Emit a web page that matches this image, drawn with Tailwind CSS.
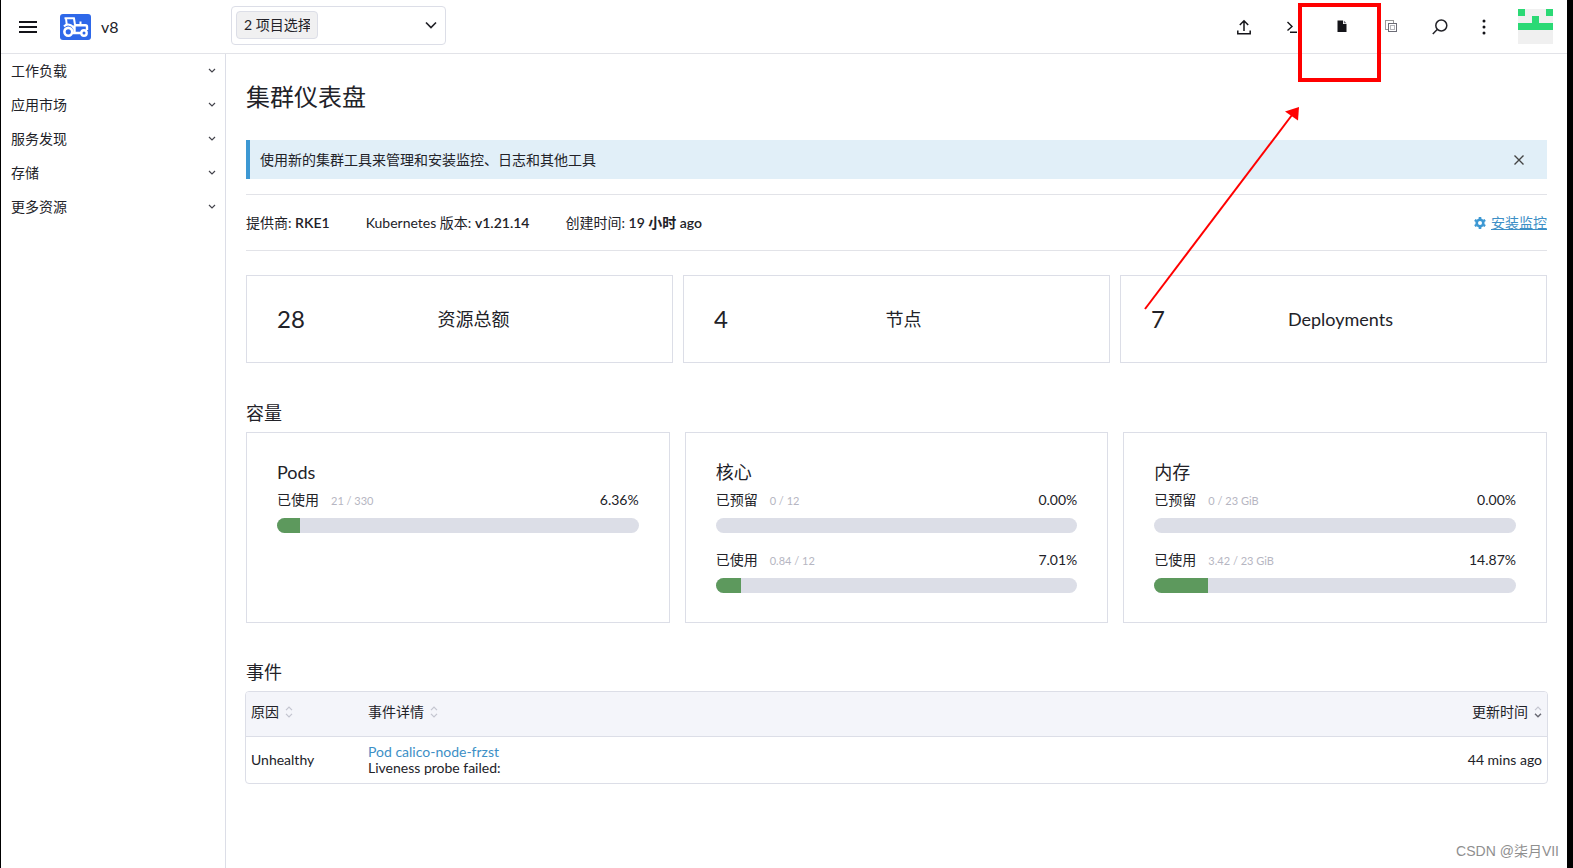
<!DOCTYPE html>
<html lang="zh-CN">
<head>
<meta charset="utf-8">
<title>集群仪表盘</title>
<meta name="viewport" content="width=device-width, initial-scale=1">
<script src="https://cdn.jsdelivr.net/npm/@tailwindcss/browser@4"></script>
</head>
<body class="relative flex min-h-screen flex-col overflow-x-hidden border-r-6 border-l border-black bg-white font-['Lato','Noto_Sans_CJK_SC',sans-serif] text-sm text-[#222228]">

<header class="flex h-[54px] shrink-0 items-center border-b border-[#e2e3e8]">
  <button type="button" aria-label="菜单" class="ml-[18px] flex h-6 w-[18px] items-center">
    <svg class="h-3 w-[18px]" viewBox="0 0 18 12" fill="#141419"><path d="M0 0h18v2H0zM0 5h18v2H0zM0 10h18v2H0z"/></svg>
  </button>
  <svg class="ml-[23px] h-[26px] w-[31px]" viewBox="0 0 31 26" aria-hidden="true">
    <rect width="31" height="26" rx="3" fill="#2e68e9"/>
    <path d="M4.500 4.200h10.300M6 4.500l.8 6.500M14 4.500l1 6.300" fill="none" stroke="#fff" stroke-width="2"/>
    <path d="M20.500 11V7.500" stroke="#fff" stroke-width="2"/>
    <path d="M14.500 11.200H25.500a1.500 1.500 0 0 1 1.500 1.500V16M12.500 19h8.500M14.500 11.200v7" fill="none" stroke="#fff" stroke-width="2.400"/>
    <path d="M4 12.500c2.500-3 8-2.500 10 2" fill="none" stroke="#fff" stroke-width="2"/>
    <circle cx="8.300" cy="17.800" r="3.900" fill="#2e68e9" stroke="#fff" stroke-width="2.600"/>
    <circle cx="24" cy="19" r="2.700" fill="#2e68e9" stroke="#fff" stroke-width="2.400"/>
  </svg>
  <span class="ml-[10px] w-[130px] text-base">v8</span>
  <label class="-mt-[3px] flex h-[39px] w-[215px] items-center justify-between rounded border border-[#dcdee7] pr-2 pl-1">
    <select aria-label="项目选择" class="h-7 w-[82px] appearance-none rounded-sm border border-[#dcdee7] bg-[#f0f0f1] px-[7px] text-sm">
      <option>2 项目选择</option>
    </select>
    <svg class="h-3 w-3" viewBox="0 0 12 12" fill="none" stroke="#222228" stroke-width="1.700"><path d="M1 3.500l5 5 5-5"/></svg>
  </label>

  <div class="ml-auto flex items-center pr-[14px]">
    <button type="button" aria-label="导入 YAML" class="mr-9">
      <svg class="block h-4 w-[14px]" viewBox="0 0 14 16" fill="none" stroke="#141419" stroke-width="1.500"><path d="M7 12V1.800M2.800 6L7 1.800 11.200 6M.8 11.500v3.300h12.400v-3.300"/></svg>
    </button>
    <button type="button" aria-label="Kubectl Shell" class="mr-10">
      <svg class="block h-4 w-[10px]" viewBox="0 0 10 16" fill="none" stroke="#141419" stroke-width="1.400"><path d="M.5 3l4.500 4.500-4.500 4M3 13.200H10"/></svg>
    </button>
    <button type="button" aria-label="下载 KubeConfig" class="mr-[38px]">
      <svg class="block h-4 w-[10px]" viewBox="0 0 10 16" fill="#141419"><path d="M.5 1.500H6V5h3.500v8H.5z"/><path d="M6.800 1.500l2.700 2.700H6.800z" fill="#6c6c76"/></svg>
    </button>
    <button type="button" aria-label="复制 KubeConfig" class="mr-[35px]">
      <svg class="block h-4 w-3" viewBox="0 0 12 16" fill="none" stroke="#6c6c76"><path d="M2.500 10.500h-2v-9h8v2" stroke-dasharray="1 1" stroke="#333"/><rect x="3.500" y="4.500" width="8" height="8"/><rect x="5.500" y="6.500" width="4" height="4" stroke-dasharray="1 1"/></svg>
    </button>
    <button type="button" aria-label="搜索" class="mr-[34px]">
      <svg class="block h-4 w-4" viewBox="0 0 16 16" fill="none" stroke="#222228" stroke-width="1.500"><circle cx="9.300" cy="6.500" r="5.500"/><path d="M5.200 10.500L.8 15"/></svg>
    </button>
    <button type="button" aria-label="更多" class="mr-8">
      <svg class="block h-4 w-1" viewBox="0 0 4 16" fill="#141419"><circle cx="2" cy="2" r="1.500"/><circle cx="2" cy="8" r="1.500"/><circle cx="2" cy="14" r="1.500"/></svg>
    </button>
    <button type="button" aria-label="用户">
      <svg class="block h-[35px] w-[35px]" viewBox="0 0 35 35" shape-rendering="crispEdges"><path fill="#f0f0f0" d="M0 0h35v35H0z"/><path fill="#2bd975" d="M0 0h7v7H0zM28 0h7v7h-7zM14 7h7v7h-7zM0 14h35v7H0z"/></svg>
    </button>
  </div>
</header>

<div class="flex flex-1">
  <nav class="w-[225px] shrink-0 border-r border-[#dcdee7]">
    <ul>
      <li><button type="button" class="flex h-[34px] w-full items-center justify-between pr-[9px] pl-[10px]">工作负载<svg class="h-2 w-2" viewBox="0 0 8 8" fill="none" stroke="#44444c" stroke-width="1.200"><path d="M1 2l3 3 3-3"/></svg></button></li>
      <li><button type="button" class="flex h-[34px] w-full items-center justify-between pr-[9px] pl-[10px]">应用市场<svg class="h-2 w-2" viewBox="0 0 8 8" fill="none" stroke="#44444c" stroke-width="1.200"><path d="M1 2l3 3 3-3"/></svg></button></li>
      <li><button type="button" class="flex h-[34px] w-full items-center justify-between pr-[9px] pl-[10px]">服务发现<svg class="h-2 w-2" viewBox="0 0 8 8" fill="none" stroke="#44444c" stroke-width="1.200"><path d="M1 2l3 3 3-3"/></svg></button></li>
      <li><button type="button" class="flex h-[34px] w-full items-center justify-between pr-[9px] pl-[10px]">存储<svg class="h-2 w-2" viewBox="0 0 8 8" fill="none" stroke="#44444c" stroke-width="1.200"><path d="M1 2l3 3 3-3"/></svg></button></li>
      <li><button type="button" class="flex h-[34px] w-full items-center justify-between pr-[9px] pl-[10px]">更多资源<svg class="h-2 w-2" viewBox="0 0 8 8" fill="none" stroke="#44444c" stroke-width="1.200"><path d="M1 2l3 3 3-3"/></svg></button></li>
    </ul>
  </nav>

  <main class="min-w-0 flex-1 px-5 pt-[27px]">
    <h1 class="text-2xl leading-8">集群仪表盘</h1>

    <div class="mt-[27px] flex h-[39px] items-center justify-between border-l-4 border-[#3d98d3] bg-[#e1eff8] pr-[23px] pl-[10px]">
      <span>使用新的集群工具来管理和安装监控、日志和其他工具</span>
      <button type="button" aria-label="关闭">
        <svg class="block h-[10px] w-[10px]" viewBox="0 0 10 10" fill="none" stroke="#444" stroke-width="1.400"><path d="M.5.5l9 9M9.500.5l-9 9"/></svg>
      </button>
    </div>

    <div class="mt-[15px] flex h-[57px] items-center gap-9 border-y border-[#e2e3e8]">
      <p>提供商: <b class="font-semibold">RKE1</b></p>
      <p>Kubernetes 版本: <b class="font-semibold">v1.21.14</b></p>
      <p>创建时间: <b class="font-semibold">19 小时 ago</b></p>
      <a href="#" class="ml-auto flex items-center gap-[5px] text-[#3d8fc6]">
        <svg class="h-3 w-3" viewBox="0 0 12 12"><circle cx="6" cy="6" r="3.300" fill="none" stroke="#3d98d3" stroke-width="2.600"/><path stroke="#3d98d3" stroke-width="2.600" d="M6 0v2M6 10v2M.8 3l1.700 1M9.500 8l1.700 1M.8 9l1.700-1M9.500 4l1.700-1"/></svg>
        <span class="underline underline-offset-1">安装监控</span>
      </a>
    </div>

    <section class="mt-6 grid grid-cols-3 gap-[10px]">
      <div class="flex h-[88px] items-center border border-[#dcdee7] px-[30px]"><span class="text-2xl">28</span><span class="flex-1 text-center text-lg">资源总额</span></div>
      <div class="flex h-[88px] items-center border border-[#dcdee7] px-[30px]"><span class="text-2xl">4</span><span class="flex-1 text-center text-lg">节点</span></div>
      <div class="flex h-[88px] items-center border border-[#dcdee7] px-[30px]"><span class="text-2xl">7</span><span class="flex-1 text-center text-lg">Deployments</span></div>
    </section>

    <h2 class="mt-9 text-lg">容量</h2>
    <section class="mt-[5px] grid grid-cols-3 gap-[15px]">
      <div class="h-[191px] border border-[#dcdee7] px-[30px] pt-[26px]">
        <h3 class="text-lg leading-[26px]">Pods</h3>
        <div class="mt-[3px] flex h-6 items-center"><span>已使用</span><span class="ml-3 pt-px text-[11px] text-[#b6b6c2]">21 / 330</span><span class="ml-auto">6.36%</span></div>
        <div role="progressbar" aria-label="Pods 已使用" aria-valuenow="6.36" class="mt-[6px] h-[15px] overflow-hidden rounded-full bg-[#dcdee7]"><div class="h-full bg-[#5d995d]" style="width:6.36%"></div></div>
      </div>
      <div class="h-[191px] border border-[#dcdee7] px-[30px] pt-[26px]">
        <h3 class="text-lg leading-[26px]">核心</h3>
        <div class="mt-[3px] flex h-6 items-center"><span>已预留</span><span class="ml-3 pt-px text-[11px] text-[#b6b6c2]">0 / 12</span><span class="ml-auto">0.00%</span></div>
        <div role="progressbar" aria-label="核心 已预留" aria-valuenow="0" class="mt-[6px] h-[15px] overflow-hidden rounded-full bg-[#dcdee7]"></div>
        <div class="mt-[15px] flex h-6 items-center"><span>已使用</span><span class="ml-3 pt-px text-[11px] text-[#b6b6c2]">0.84 / 12</span><span class="ml-auto">7.01%</span></div>
        <div role="progressbar" aria-label="核心 已使用" aria-valuenow="7.01" class="mt-[6px] h-[15px] overflow-hidden rounded-full bg-[#dcdee7]"><div class="h-full bg-[#5d995d]" style="width:7.01%"></div></div>
      </div>
      <div class="h-[191px] border border-[#dcdee7] px-[30px] pt-[26px]">
        <h3 class="text-lg leading-[26px]">内存</h3>
        <div class="mt-[3px] flex h-6 items-center"><span>已预留</span><span class="ml-3 pt-px text-[11px] text-[#b6b6c2]">0 / 23 GiB</span><span class="ml-auto">0.00%</span></div>
        <div role="progressbar" aria-label="内存 已预留" aria-valuenow="0" class="mt-[6px] h-[15px] overflow-hidden rounded-full bg-[#dcdee7]"></div>
        <div class="mt-[15px] flex h-6 items-center"><span>已使用</span><span class="ml-3 pt-px text-[11px] text-[#b6b6c2]">3.42 / 23 GiB</span><span class="ml-auto">14.87%</span></div>
        <div role="progressbar" aria-label="内存 已使用" aria-valuenow="14.87" class="mt-[6px] h-[15px] overflow-hidden rounded-full bg-[#dcdee7]"><div class="h-full bg-[#5d995d]" style="width:14.87%"></div></div>
      </div>
    </section>

    <h2 class="mt-[35px] text-lg">事件</h2>
    <div class="mt-[5px] -mr-px -ml-px overflow-hidden rounded border border-[#dcdee7]">
      <table class="w-full text-left">
        <thead class="bg-[#f4f5fa]">
          <tr class="h-11 border-b border-[#dcdee7]">
            <th scope="col" class="w-[117px] pb-1 pl-[5px] font-normal"><button type="button" class="flex items-center gap-[6px]">原因<svg class="h-3 w-2" viewBox="0 0 8 12" fill="none" stroke="#c3c5d0" stroke-width="1.200"><path d="M1 4.200l3-3 3 3M1 7.800l3 3 3-3"/></svg></button></th>
            <th scope="col" class="pb-1 pl-[5px] font-normal"><button type="button" class="flex items-center gap-[6px]">事件详情<svg class="h-3 w-2" viewBox="0 0 8 12" fill="none" stroke="#c3c5d0" stroke-width="1.200"><path d="M1 4.200l3-3 3 3M1 7.800l3 3 3-3"/></svg></button></th>
            <th scope="col" class="pr-[5px] pb-1 font-normal"><button type="button" class="ml-auto flex items-center gap-[6px]">更新时间<svg class="h-3 w-2" viewBox="0 0 8 12" fill="none" stroke-width="1.200"><path stroke="#c3c5d0" d="M1 4.200l3-3 3 3"/><path stroke="#6c6c76" stroke-width="1.500" d="M1 7.800l3 3 3-3"/></svg></button></th>
          </tr>
        </thead>
        <tbody>
          <tr class="h-[47px]">
            <td class="pl-[5px]">Unhealthy</td>
            <td class="pl-[5px] leading-4"><a href="#" class="text-[#3d8fc6]">Pod calico-node-frzst</a><br>Liveness probe failed:</td>
            <td class="pr-[5px] text-right">44 mins ago</td>
          </tr>
        </tbody>
      </table>
    </div>
  </main>
</div>

<svg class="pointer-events-none absolute top-0 right-[180px] h-[312px] w-[250px]" viewBox="0 0 250 312" aria-hidden="true">
  <rect x="163" y="5" width="79" height="75" fill="none" stroke="#f00" stroke-width="4"/>
  <path d="M8 309L155 115" stroke="#f00" stroke-width="2"/>
  <path d="M162 107l-14 4.500L161 120.500z" fill="#f00"/>
</svg>
<p class="absolute right-2 bottom-[7px] font-['Liberation_Sans','Noto_Sans_CJK_SC',sans-serif] text-sm text-[#8f8f8f]">CSDN @柒月VII</p>
</body>
</html>
